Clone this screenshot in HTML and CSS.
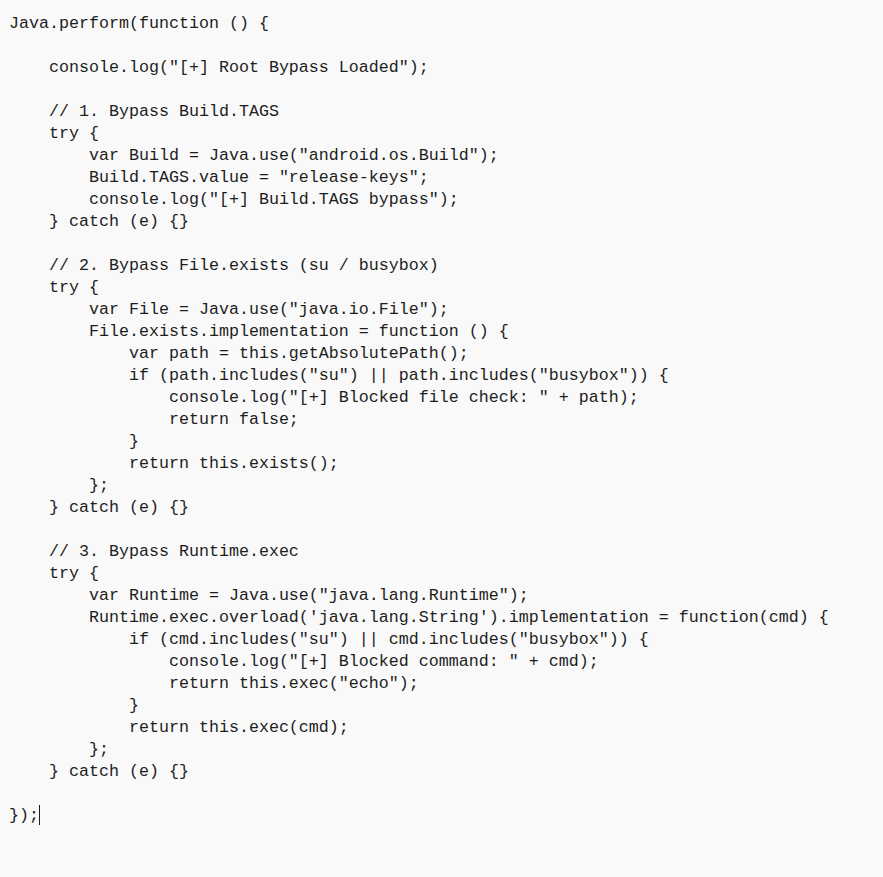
FILE: index.html
```html
<!DOCTYPE html>
<html>
<head>
<meta charset="utf-8">
<link rel="stylesheet" href="styles.css">
</head>
<body>
<pre class="code">Java.perform(function () {

    console.log("[+] Root Bypass Loaded");

    // 1. Bypass Build.TAGS
    try {
        var Build = Java.use("android.os.Build");
        Build.TAGS.value = "release-keys";
        console.log("[+] Build.TAGS bypass");
    } catch (e) {}

    // 2. Bypass File.exists (su / busybox)
    try {
        var File = Java.use("java.io.File");
        File.exists.implementation = function () {
            var path = this.getAbsolutePath();
            if (path.includes("su") || path.includes("busybox")) {
                console.log("[+] Blocked file check: " + path);
                return false;
            }
            return this.exists();
        };
    } catch (e) {}

    // 3. Bypass Runtime.exec
    try {
        var Runtime = Java.use("java.lang.Runtime");
        Runtime.exec.overload('java.lang.String').implementation = function(cmd) {
            if (cmd.includes("su") || cmd.includes("busybox")) {
                console.log("[+] Blocked command: " + cmd);
                return this.exec("echo");
            }
            return this.exec(cmd);
        };
    } catch (e) {}

});<span class="caret"></span></pre>
</body>
</html>
```
FILE: styles.css
```css
html, body {
  margin: 0;
  padding: 0;
  background: #f9f9f9;
}
.code {
  margin: 0;
  padding: 13px 9px;
  font-family: "Liberation Mono", "DejaVu Sans Mono", monospace;
  font-size: 16.67px;
  line-height: 22px;
  color: #1e1e1e;
  white-space: pre;
}
.caret {
  display: inline-block;
  width: 0;
  height: 20px;
  border-left: 1px solid #1e1e1e;
  vertical-align: -5px;
}
```
